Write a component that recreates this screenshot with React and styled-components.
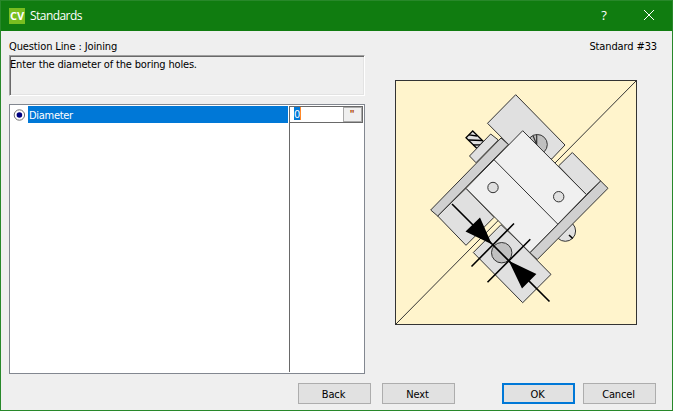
import React from "react";
import styled, { createGlobalStyle } from "styled-components";

const GlobalStyle = createGlobalStyle`
  *, *::before, *::after { box-sizing: border-box; }
  body { margin: 0; overflow: hidden; }
`;

const Window = styled.div`
  width: 673px;
  height: 411px;
  display: flex;
  flex-direction: column;
  border: 1px solid #28882a;
  background: #efefef;
  color: #000;
  font: 11px/14px "DejaVu Sans Condensed", "DejaVu Sans", sans-serif;
`;

const TitleBar = styled.header`
  flex: none;
  height: 30px;
  display: flex;
  align-items: center;
  padding-left: 8px;
  background: #107c10;
  color: #fff;
`;

const AppIcon = styled.span`
  width: 16px;
  height: 16px;
  margin: 0 5px 1px 0;
  background: #78be20;
  font: bold 11px/16px "Open Sans", sans-serif;
  letter-spacing: -0.2px;
  text-align: center;
`;

const Title = styled.h1`
  flex: 1;
  margin: 0;
  font: 12px/16px "Open Sans", sans-serif;
  letter-spacing: -0.55px;
`;

const CaptionButton = styled.button`
  width: 45px;
  height: 30px;
  padding: 0 1px 2px 0;
  border: 0;
  background: none;
  color: inherit;
  display: grid;
  place-items: center;
  font: 13px/16px "Open Sans", sans-serif;
`;

const Content = styled.main`
  flex: 1;
  display: grid;
  grid-template-columns: 356px 1fr;
  column-gap: 30px;
  padding: 8px 15px 0 8px;
  height: 343px;
`;

const Form = styled.section`
  display: flex;
  flex-direction: column;
`;

const Label = styled.div`
  height: 16px;
  line-height: 16px;
  white-space: nowrap;
  letter-spacing: -0.12px;
`;

const Message = styled.div`
  height: 41px;
  padding: 2px 0 0;
  border: 1px solid;
  border-color: #a0a0a0 #fff #fff #a0a0a0;
  box-shadow: inset 1px 1px #696969, inset -1px -1px #e3e3e3;
  letter-spacing: -0.17px;
`;

const Table = styled.div`
  height: 270px;
  margin-top: 8px;
  display: grid;
  grid-template-columns: 279px 1fr;
  border: 1px solid #828790;
  background: #fff;
  padding: 1px;
`;

const NameColumn = styled.div`
  border-right: 1px solid #696969;
`;

const Option = styled.div`
  height: 17px;
  display: flex;
  align-items: center;
  padding-left: 2px;
`;

const OptionName = styled.span`
  flex: 1;
  height: 17px;
  margin: 0 1px 0 3px;
  padding-left: 1px;
  line-height: 19px;
  background: #0078d7;
  color: #fff;
  letter-spacing: -0.3px;
`;

const Editor = styled.div`
  height: 17px;
  width: 73px;
  display: flex;
  justify-content: space-between;
  border: 1px solid #696969;
  border-left: 0;
  background: #fff;
`;

const Value = styled.span`
  height: 13px;
  margin-left: 4px;
  border-right: 1px solid #ff8728;
  background: #0078d7;
  color: #fff;
  line-height: 15px;
  letter-spacing: -0.3px;
`;

const Unit = styled.button`
  width: 19px;
  height: 15px;
  padding: 0 1px 0 0;
  border: 1px solid #a9a9a9;
  background: #efefef;
  color: #b04a08;
  font: bold 10px/14px "Liberation Sans", sans-serif;
`;

const Preview = styled.aside`
  display: flex;
  flex-direction: column;
`;

const StandardName = styled(Label)`
  height: 41px;
  text-align: right;
`;

const Drawing = styled.svg`
  display: block;
  width: 243px;
  height: 246px;
  stroke: #333;
  stroke-width: 1;
`;

const Footer = styled.footer`
  display: flex;
  height: 36px;
  padding: 9px 16px 6px 0;
  justify-content: flex-end;
`;

const Button = styled.button`
  width: 73px;
  height: 21px;
  margin-left: ${(p) => p.$gap || "0"};
  padding: ${(p) => (p.$primary ? "1px 2px 0 0" : "2px 2px 0 0")};
  border: ${(p) => (p.$primary ? "2px solid #0078d7" : "1px solid #adadad")};
  background: #e1e1e1;
  color: #000;
  font: inherit;
  line-height: 17px;
  letter-spacing: -0.15px;
`;

function HingeDrawing() {
  return (
    <Drawing viewBox="395 80 243 246">
      <rect x="395.5" y="80.5" width="241" height="244" fill="#fff4cc" />
      <path d="M395.5 324.5 636.5 80.5" />
      <path fill="#e0e0e0" d="M515.7 94.7 487.5 123.3 522 158 551.7 159 565 145Z" />
      <circle cx="537.3" cy="144.5" r="10" fill="#c0c0c0" />
      <path fill="none" strokeWidth="1.2" d="M533 135.5 537 145.5 M536.7 134.5V146" />
      <path fill="#e0e0e0" d="M572.3 152.5 600.7 181 586.3 194.7 558.5 166Z" />
      <path fill="#e0e0e0" d="M437.7 216 466 245.3 494 217.3 466 188.3Z" />
      <path fill="#e0e0e0" d="M501 224.7 473.3 252.5 522.7 302.7 551 274.4 515 238Z" />
      <path
        fill="#e0e0e0"
        stroke="#000"
        strokeWidth="1.3"
        d="M472.7 131 466 137.7 477 148.5 483.5 141.5Z"
      />
      <path stroke="#000" strokeWidth="1.3" d="M469 134.8 477 136M468.5 140 482 140.5M473 145 480 144.8" />
      <path fill="#e0e0e0" d="M490.7 134 469.5 156 476 162.7 498.3 140Z" />
      <circle cx="565.3" cy="231" r="10.3" fill="#e0e0e0" />
      <path stroke="#000" strokeWidth="1.5" d="M569 235 572.7 238.5" />
      <path fill="#f0f0f0" d="M522.7 130.7 586.5 194.7 530 252.7 466 188.3Z" />
      <path d="M494.3 160 557.7 224" />
      <path fill="#d0d0d0" d="M501 138 430.7 210 437.7 216 508.3 144.5Z" />
      <path fill="#d0d0d0" d="M600.7 181 608 188.3 537.3 259.5 530 252.7Z" />
      <circle cx="493" cy="187.5" r="5.2" fill="#e0e0e0" />
      <circle cx="558.7" cy="196.7" r="5.2" fill="#e0e0e0" />
      <circle cx="501.7" cy="252.7" r="10.2" fill="#c0c0c0" />
      <g stroke="#000" strokeWidth="1.6">
        <path d="M452 204 549.5 301.5M471.5 266.5 514 223.5M487.5 282.3 530.3 239.3" />
        <path stroke="none" fill="#000" d="M491.8 244.3 480 217.5 465.5 231.5ZM508.7 260.7 536.4 274 522 288.4Z" />
      </g>
    </Drawing>
  );
}

export default function App() {
  return (
    <>
      <GlobalStyle />
      <Window>
        <TitleBar>
          <AppIcon>CV</AppIcon>
          <Title>Standards</Title>
          <CaptionButton aria-label="Help">?</CaptionButton>
          <CaptionButton aria-label="Close">
            <svg width="10" height="10" viewBox="0 0 10 10" stroke="#fff" fill="none">
              <path d="M0 0 10 10M10 0 0 10" />
            </svg>
          </CaptionButton>
        </TitleBar>
        <Content>
          <Form>
            <Label>Question Line : Joining</Label>
            <Message>Enter the diameter of the boring holes.</Message>
            <Table>
              <NameColumn>
                <Option>
                  <svg width="12" height="12" viewBox="0 0 12 12">
                    <circle cx="6.4" cy="6" r="5.2" fill="#fff" stroke="#707070" />
                    <circle cx="6.4" cy="6" r="2.8" fill="#000080" />
                  </svg>
                  <OptionName>Diameter</OptionName>
                </Option>
              </NameColumn>
              <Editor>
                <Value>0</Value>
                <Unit>"</Unit>
              </Editor>
            </Table>
          </Form>
          <Preview>
            <StandardName>Standard #33</StandardName>
            <HingeDrawing />
          </Preview>
        </Content>
        <Footer>
          <Button>Back</Button>
          <Button $gap="11px">Next</Button>
          <Button $gap="47px" $primary>OK</Button>
          <Button $gap="8px">Cancel</Button>
        </Footer>
      </Window>
    </>
  );
}
